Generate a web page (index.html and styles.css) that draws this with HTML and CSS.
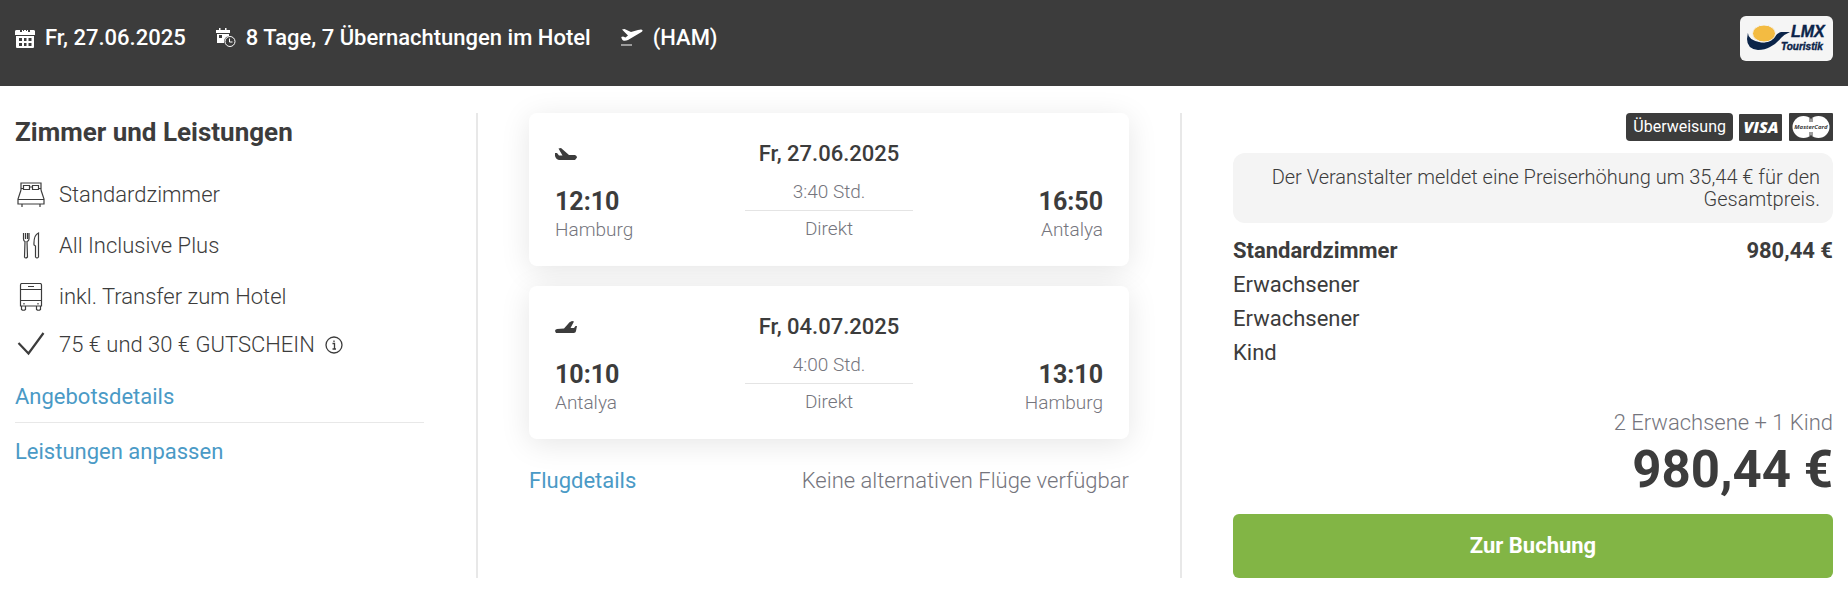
FILE: index.html
```html
<!DOCTYPE html>
<html lang="de">
<head>
<meta charset="utf-8">
<meta name="viewport" content="width=device-width, initial-scale=1">
<title>Reiseangebot</title>
<link rel="stylesheet" href="styles.css">
</head>
<body>
<header class="topbar">
  <ul class="facts">
    <li class="fact">
      <svg class="fact-icon" viewBox="0 0 20 20" aria-hidden="true"><path fill="currentColor" fill-rule="evenodd" d="M2 2h3v2h2V2h1v1h1V2h2v1h1V2h1v2h2V2h3a1.500 1.500 0 0 1 2 1.500V7H0V3.500A1.500 1.500 0 0 1 2 2zM1 8h18v11q0 1-1 1H2q-1 0-1-1zM4 10v3h3v-3zM9 10v3h2.500v-3zM13.500 10v3h3v-3zM4 15v3h3v-3zM9 15v3h2.500v-3zM13.500 15v3h3v-3z"/></svg>
      <span>Fr, 27.06.2025</span>
    </li>
    <li class="fact">
      <svg class="fact-icon" viewBox="0 0 20 20" aria-hidden="true"><path fill="currentColor" fill-rule="evenodd" d="M0 2h14v3H0zM1 6h12v2a6 6 0 0 0-5 6v1H1zM3 7v3h3V7z"/><path fill="currentColor" d="M3 0h1.500v3H3zM9 0h1.500v3H9z"/><circle cx="14" cy="13.500" r="5" fill="none" stroke="currentColor"/><path d="M13.500 10.500v3.500H16.500" fill="none" stroke="currentColor"/></svg>
      <span>8 Tage, 7 Übernachtungen im Hotel</span>
    </li>
    <li class="fact">
      <svg class="fact-icon fact-icon-wide" viewBox="0 0 22 20" aria-hidden="true"><path fill="currentColor" d="M1 1.500 3.500 1 10 4l7-2q4-1.200 4.500.3T18 5.500L7 12q-2 1-4 .8Q1 12.500.2 9L2 8.500l2.500 1 2.500-2z"/><path d="M0 17h11" stroke="currentColor" stroke-width="1.500" opacity=".65"/></svg>
      <span>(HAM)</span>
    </li>
  </ul>
  <svg class="operator" viewBox="0 0 93 45" role="img" aria-label="LMX Touristik">
    <rect width="93" height="45" rx="6" fill="#f5f5f5"/>
    <path fill="#0b2449" d="M8 16q-1 8 13 10.500 8 0 13-5 4-5 7-5.500h9q-5 2-9 6-5 6-11 9-5 3-12 3-11-1-11-11z"/>
    <ellipse cx="24" cy="17.500" rx="11.500" ry="8.500" fill="#f3bb42" stroke="#f5f5f5"/>
    <text class="operator-top" x="51" y="21">LMX</text>
    <text class="operator-bottom" x="41" y="34">Touristik</text>
  </svg>
</header>

<main class="offer">
  <section class="services">
    <h2 class="title">Zimmer und Leistungen</h2>
    <ul class="service-list">
      <li class="service">
        <svg class="service-icon" viewBox="0 0 28 28" aria-hidden="true"><path d="M4 9V2h20v7M4 9 1 18v5h26v-5L24 9M1 18.500h26M5 23v3M23 23v3M6.500 4.500h6v4h-6zM15.500 4.500h6v4h-6zM12.500 6h3M4 7.500h2.500M21.500 7.500H24"/></svg>
        <span>Standardzimmer</span>
      </li>
      <li class="service">
        <svg class="service-icon" viewBox="0 0 28 28" aria-hidden="true"><path d="M6.500 1v6q0 2 1.500 2.500L7.500 25q1 2 3 0L10 9.500q2-.5 2-2.500V1M8.500 1v6M10.500 1v6M21.500 1v24q-1.500 2-3 0V14l-1.500-1Q16.500 3 21.500 1z"/></svg>
        <span>All Inclusive Plus</span>
      </li>
      <li class="service">
        <svg class="service-icon" viewBox="0 0 28 28" aria-hidden="true"><path d="M5 .500h18q1.500 0 1.500 1.500v21h-21V2q0-1.500 1.500-1.500zM3.500 6.500h21M3.500 17.500h21M4.500 23v3.500q2 1.500 4 0V23M19.500 23v3.500q2 1.500 4 0V23M11 3.500h6M7 20v1.500M21 20v1.500"/></svg>
        <span>inkl. Transfer zum Hotel</span>
      </li>
      <li class="service service-short">
        <svg class="service-icon service-check" viewBox="0 0 28 28" aria-hidden="true"><path d="m1.500 12 10 10.500L26.500 2"/></svg>
        <span>75 € und 30 € GUTSCHEIN</span>
        <svg class="info-icon" viewBox="0 0 18 18" aria-hidden="true"><circle cx="9" cy="9" r="8"/><path d="M7.500 7.500h2V13M7.500 13h3.500M9 4.500v1.500"/></svg>
      </li>
    </ul>
    <a class="link" href="#angebot">Angebotsdetails</a>
    <hr class="rule">
    <a class="link" href="#leistungen">Leistungen anpassen</a>
  </section>

  <section class="flights">
    <article class="flight">
      <svg class="plane" viewBox="0 0 22 12" aria-hidden="true"><path fill="currentColor" d="M0 5h2l2 2.500h3.500L3.500.500 6 0l8 7h6q2 .5 2 2.500L20 12H4Q1 11.500 0 8z"/></svg>
      <h3 class="flight-date">Fr, 27.06.2025</h3>
      <div class="stop"><strong class="time">12:10</strong><span class="city">Hamburg</span></div>
      <div class="route"><span>3:40 Std.</span><span class="route-kind">Direkt</span></div>
      <div class="stop stop-end"><strong class="time">16:50</strong><span class="city">Antalya</span></div>
    </article>
    <article class="flight">
      <svg class="plane" viewBox="0 0 22 12" aria-hidden="true"><path fill="currentColor" d="M22 5h-1.500L19 7h-3.500L19 .500 17 0q-3 1-4 3L9 7.500 2 8Q0 8.500 0 10l1 2h18q2-.5 2-2z"/></svg>
      <h3 class="flight-date">Fr, 04.07.2025</h3>
      <div class="stop"><strong class="time">10:10</strong><span class="city">Antalya</span></div>
      <div class="route"><span>4:00 Std.</span><span class="route-kind">Direkt</span></div>
      <div class="stop stop-end"><strong class="time">13:10</strong><span class="city">Hamburg</span></div>
    </article>
    <footer class="flight-footer">
      <a class="link" href="#flug">Flugdetails</a>
      <span class="muted">Keine alternativen Flüge verfügbar</span>
    </footer>
  </section>

  <section class="booking">
    <div class="payments">
      <span class="payment">Überweisung</span>
      <svg class="card-icon" viewBox="0 0 44 28" role="img" aria-label="VISA"><rect x="0" y="1" width="43" height="27" rx="1" fill="#3c3c3c"/><text class="visa" x="22" y="20">VISA</text></svg>
      <svg class="card-icon" viewBox="0 0 44 28" role="img" aria-label="MasterCard"><rect width="44" height="28" rx="1" fill="#3c3c3c"/><circle cx="14.500" cy="14" r="11" fill="#fff"/><circle cx="29.500" cy="14" r="11" fill="#fff"/><path d="M20 6h4M20 8h4M20 20h4M20 22h4" stroke="#3c3c3c"/><text class="mastercard" x="22" y="16">MasterCard</text></svg>
    </div>
    <p class="notice">Der Veranstalter meldet eine Preiserhöhung um 35,44 € für den Gesamtpreis.</p>
    <ul class="prices">
      <li class="price-row price-row-strong"><span>Standardzimmer</span><span>980,44 €</span></li>
      <li class="price-row">Erwachsener</li>
      <li class="price-row">Erwachsener</li>
      <li class="price-row">Kind</li>
    </ul>
    <div class="total">
      <span class="muted">2 Erwachsene + 1 Kind</span>
      <strong class="total-price">980,44 €</strong>
    </div>
    <button class="book" type="button">Zur Buchung</button>
  </section>
</main>
</body>
</html>
```
FILE: styles.css
```css
* {
  box-sizing: border-box;
}

body {
  margin: 0;
  background: #fff;
  color: #3c3c3c;
  font: 300 22px/34px Roboto, "Liberation Sans", sans-serif;
}

h2,
h3,
p,
ul {
  margin: 0;
  padding: 0;
  list-style: none;
}

.topbar {
  display: flex;
  justify-content: space-between;
  align-items: flex-start;
  min-height: 86px;
  padding: 16px 15px;
  background: #3c3c3c;
  color: #fff;
  font-weight: 500;
}

.facts {
  display: flex;
  gap: 30px;
  padding-top: 5px;
}

.fact {
  display: flex;
  align-items: center;
  gap: 10px;
}

.fact-icon {
  width: 20px;
  height: 20px;
}

.fact-icon-wide {
  width: 22px;
}

.operator {
  width: 93px;
  height: 45px;
}

.operator text {
  fill: #0b2449;
  stroke: #0b2449;
  stroke-width: 0.4;
  font-family: "Liberation Sans", Arial, sans-serif;
  font-style: italic;
  font-weight: 700;
}

.operator .operator-top {
  font-size: 16px;
}

.operator .operator-bottom {
  font-size: 10px;
}

.offer {
  display: grid;
  grid-template-columns: 463fr 704fr 651fr;
  padding: 27px 15px 18px;
}

.services {
  padding-right: 52px;
  border-right: 2px solid #e8e8e8;
}

.flights {
  padding-right: 51px;
  border-right: 2px solid #e8e8e8;
}

.flights,
.booking {
  padding-left: 51px;
}

.title {
  padding: 2px 0 20px;
  font-size: 26px;
  font-weight: 700;
}

.service {
  display: flex;
  align-items: center;
  gap: 14px;
  height: 51px;
  padding-left: 2px;
}

.service-short {
  height: 46px;
}

.service-icon {
  width: 28px;
  height: 28px;
  fill: none;
  stroke: currentColor;
  stroke-width: 1.2;
}

.service-check {
  stroke-width: 2.2;
}

.info-icon {
  width: 18px;
  height: 18px;
  margin-left: -4px;
  fill: none;
  stroke: currentColor;
  stroke-width: 1.3;
}

.link {
  color: #4a9ac6;
  font-weight: 400;
  text-decoration: none;
}

.services .link {
  display: block;
  padding: 12px 0 8px;
}

.rule {
  margin: 0;
  border: 0;
  border-top: 1px solid #e8e8e8;
}

.flights {
  display: flex;
  flex-direction: column;
  gap: 20px;
}

.flight {
  display: grid;
  grid-template-columns: 1fr 168px 1fr;
  padding: 24px 26px 19px;
  border-radius: 8px;
  background: #fff;
  box-shadow: 0 5px 30px rgba(0, 0, 0, 0.1);
}

.plane {
  width: 22px;
  height: 12px;
  margin-top: 11px;
}

.flight-date {
  grid-column: 2 / 4;
  width: 168px;
  font-size: 22px;
  font-weight: 500;
  line-height: 33px;
  text-align: center;
}

.stop {
  display: flex;
  flex-direction: column;
  padding-top: 18px;
  color: #75757d;
  font-size: 19px;
  line-height: 28px;
}

.stop-end {
  text-align: right;
}

.time {
  color: #3c3c3c;
  font-size: 25px;
  font-weight: 700;
}

.route {
  display: flex;
  flex-direction: column;
  padding-top: 4px;
  color: #75757d;
  font-size: 19px;
  line-height: 36px;
  text-align: center;
}

.route-kind {
  border-top: 1px solid #e4e4e4;
}

.flight-footer {
  display: flex;
  justify-content: space-between;
  padding-top: 5px;
}

.muted {
  color: #75757d;
}

.booking {
  display: flex;
  flex-direction: column;
}

.payments {
  display: flex;
  justify-content: flex-end;
  gap: 6px;
}

.payment {
  padding: 0 7px;
  border-radius: 4px;
  background: #3c3c3c;
  color: #fff;
  font-size: 16px;
  font-weight: 400;
  line-height: 28px;
}

.card-icon {
  width: 44px;
  height: 28px;
}

.card-icon text {
  font-family: "Open Sans", sans-serif;
  font-style: italic;
  text-anchor: middle;
}

.card-icon .visa {
  fill: #fff;
  font-size: 16px;
  font-weight: 800;
}

.card-icon .mastercard {
  fill: #3c3c3c;
  font-size: 6px;
  font-weight: 700;
}

.notice {
  margin: 12px 0 11px;
  padding: 13px;
  border-radius: 12px;
  background: #f4f4f4;
  font-size: 20px;
  line-height: 22px;
  text-align: right;
}

.price-row {
  display: flex;
  justify-content: space-between;
  font-weight: 400;
}

.price-row-strong {
  font-weight: 700;
}

.total {
  display: flex;
  flex-direction: column;
  margin-top: auto;
  padding-top: 36px;
  text-align: right;
}

.total-price {
  font-size: 51px;
  font-weight: 700;
  line-height: 60px;
}

.book {
  margin-top: 14px;
  padding: 15px;
  border: 0;
  border-radius: 6px;
  background: #82b545;
  color: #fff;
  font: 700 22px/34px Roboto, "Liberation Sans", sans-serif;
  cursor: pointer;
}
```
